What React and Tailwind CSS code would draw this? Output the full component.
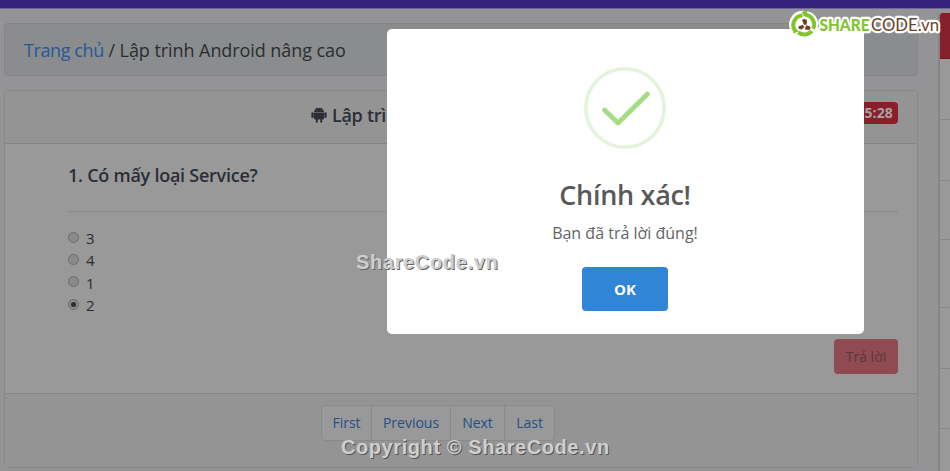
const cells = ['h-[61px]', 'h-[61px]', 'h-[59px]', 'h-[68px]', 'h-[61px]', 'h-[60px]', 'h-[60px]'];

const answers = [
  { label: '3', checked: false },
  { label: '4', checked: false },
  { label: '1', checked: false },
  { label: '2', checked: true },
];

function AndroidIcon() {
  return (
    <svg width="16" height="16" viewBox="0 0 16 16" fill="#2b2e36" className="-mt-px shrink-0">
      <path d="M3 5C3.1 3.2 4.2 1.9 5.7 1.3L5.2.4l.4-.2.6 1a5.6 5.6 0 0 1 3.6 0l.6-1 .4.2-.5.9c1.4.7 2.6 1.9 2.7 3.7z" />
      <path d="M3 5.4h10v5.9c0 .7-.5 1.2-1.2 1.2h-.6v2.2a1 1 0 0 1-2 0v-2.2H6.8v2.2a1 1 0 0 1-2 0v-2.2h-.6c-.7 0-1.2-.5-1.2-1.2z" />
      <rect x=".4" y="5.2" width="2.3" height="5.8" rx="1" />
      <rect x="13.3" y="5.2" width="2.3" height="5.8" rx="1" />
      <circle cx="5.8" cy="3.4" r=".35" fill="#949494" />
      <circle cx="10.2" cy="3.4" r=".35" fill="#949494" />
    </svg>
  );
}

function Radio({ checked }) {
  return (
    <span className="flex size-[11px] items-center justify-center rounded-full border border-[#6c6c6c] bg-[#8a8a8a]">
      {checked && <span className="size-[5px] rounded-full bg-[#2d2d2d]" />}
    </span>
  );
}

function Logo() {
  return (
    <svg width="158" height="34" viewBox="0 0 158 34" className="absolute left-[789px] top-[8px]">
      <g fill="none" stroke="#fff" strokeWidth="7.5" strokeLinejoin="round">
        <path d="M5.9 22.5A10 10 0 0 1 14.5 6.5" />
        <path d="M17 6.6A10.2 10.2 0 0 1 24.3 21.5" />
        <path d="M23 23.2A10.2 10.2 0 0 1 9 24.5" />
      </g>
      <circle cx="15.5" cy="17" r="9" fill="#fff" />
      <g fill="none" stroke="#80c62e" strokeWidth="4">
        <path d="M5.9 22.5A10 10 0 0 1 13.5 7.2" />
        <path d="M16.8 6.8A10 10 0 0 1 24.2 20.8" />
        <path d="M22.8 23.2A10 10 0 0 1 9.2 24.4" />
      </g>
      <path d="M12.5 4l6-1.6-1.5 7z" fill="#80c62e" />
      <path d="M4 25.5l1.3-6 4.7 4z" fill="#80c62e" />
      <g fill="#6b4228">
        <path d="M13 12q3.6-2.2 5.1.8l-.5 3.8-2.6.3z" />
        <path d="M13.8 16.8l1.6 2.4-2.8 2.3q-3.5 0-3.2-3z" />
        <path d="M17 17.3l3.8 1q1.8 2.4-.9 3.8l-4-.6z" />
      </g>
      <g stroke="#fff" strokeWidth="4.5" strokeLinejoin="round" paintOrder="stroke" className="font-['Lato',sans-serif]">
        <text x="30.5" y="23.3" fontSize="17.4" fontWeight="900" fill="#80c62e" textLength="50" lengthAdjust="spacingAndGlyphs">SHARE</text>
        <text x="82" y="23.3" fontSize="17.4" fontWeight="400" fill="#6b4228" textLength="68" lengthAdjust="spacingAndGlyphs">CODE.vn</text>
      </g>
    </svg>
  );
}

export default function App() {
  return (
    <div className="relative h-[471px] w-[950px] overflow-hidden bg-[#949497] font-['Open_Sans','Noto_Sans',sans-serif] text-[#2a2d30]">
      <div className="h-[9px] border-b border-[#6f669a] bg-[#35227f]" />
      <div className="flex">
        <main className="ml-[4px] mt-[14px] w-[914px]">
          <nav className="flex h-[53px] items-center whitespace-pre rounded border border-[#838587] bg-[#8a8c8e] pl-[19px] pt-px text-[18px]">
            <span className="tracking-[-0.4px] text-[#245a99]">Trang chủ</span>
            <span className="tracking-[-0.07px]"> / Lập trình Android nâng cao</span>
          </nav>

          <section className="mt-[14px] h-[378px] rounded border border-[#888889] bg-[#999]">
            <header className="flex h-[53px] items-center border-b border-[#868686] bg-[#949494] pb-[4px] pl-[306px] pr-[19px]">
              <AndroidIcon />
              <h1 className="ml-[5px] flex-1 whitespace-nowrap text-[18px] font-semibold tracking-[-0.3px] text-[#2b2e36]">Lập trình Android nâng cao</h1>
              <span className="-mt-[5px] flex h-[22px] w-[64px] items-center justify-end rounded bg-[#892029] pr-[5px] text-[14px] font-bold tracking-[0.15px] text-[#a9a3a4]">
                05:28
              </span>
            </header>

            <div className="h-[249px] pl-[63px] pr-[19px]">
              <h2 className="flex h-[68px] items-center border-b border-[#8a8a8a] pb-[4px] text-[18px] font-semibold tracking-[-0.25px] text-[#2b2e36]">
                1. Có mấy loại Service?
              </h2>
              <div className="mt-[14px]">
                {answers.map((a) => (
                  <label key={a.label} className="flex h-[22.4px] items-center gap-[7px] text-[15px]">
                    <Radio checked={a.checked} />
                    <span className="pt-[2px]">{a.label}</span>
                  </label>
                ))}
              </div>
              <div className="mt-[23px] flex justify-end">
                <button className="h-[35px] w-[64px] rounded bg-[#8f4b51] text-[14px] text-[#5e373d]">Trả lời</button>
              </div>
            </div>

            <footer className="h-[74px] border-t border-[#868686] bg-[#949494] pl-[316px] pt-[11px]">
              <div className="flex h-[36px] w-[234px] divide-x divide-[#888a8c] rounded border border-[#888a8c] bg-[#999] text-[14px] text-[#234f87]">
                <span className="flex w-[50px] items-center justify-center pb-px">First</span>
                <span className="flex w-[79px] items-center justify-center pb-px">Previous</span>
                <span className="flex w-[54px] items-center justify-center pb-px">Next</span>
                <span className="flex w-[49px] items-center justify-center pb-px">Last</span>
              </div>
            </footer>
          </section>
        </main>

        <aside className="ml-[20px] mt-[4px] w-[12px] shrink-0 overflow-hidden rounded-tl border-l-2 border-[#858586] bg-[#999]">
          <div className="-ml-[2px] h-[46px] border-b border-[#701c24] bg-[#861f2a]" />
          {cells.map((height, i) => (
            <div key={i} className={`${height} border-b border-[#868686]`} />
          ))}
        </aside>
      </div>

      <div role="dialog" className="absolute left-[387px] top-[29px] flex h-[305px] w-[477px] flex-col items-center rounded-[5px] bg-white pr-px pt-[38px]">
        <svg width="82" height="82" viewBox="0 0 82 82" fill="none" className="shrink-0">
          <circle cx="41" cy="41" r="39.2" stroke="#e4f4db" strokeWidth="3.6" />
          <path d="M20.5 43L34 56L63.5 27" stroke="#a5dc86" strokeWidth="4.8" strokeLinecap="round" strokeLinejoin="round" />
        </svg>
        <h2 className="mt-[25px] text-[27px] font-semibold leading-[42px] tracking-[-0.3px] text-[#595959]">Chính xác!</h2>
        <p className="mt-[4px] text-[16px] leading-[26px] text-[#646464]">Bạn đã trả lời đúng!</p>
        <button className="mt-[21px] h-[44px] w-[86px] rounded bg-[#3085d6] text-[15px] font-bold text-white">OK</button>
      </div>

      <div className="absolute left-[356px] top-[250px] whitespace-nowrap font-['Liberation_Sans',sans-serif] text-[20px] font-bold leading-[24px] tracking-[0.65px] text-[#cfcfcf] [text-shadow:1px_1px_0_#666]">
        ShareCode.vn
      </div>
      <div className="absolute left-[341px] top-[435px] whitespace-nowrap font-['Liberation_Sans',sans-serif] text-[20px] font-bold leading-[24px] tracking-[0.58px] text-[#cfcfcf] [text-shadow:1px_1px_0_#555]">
        Copyright © ShareCode.vn
      </div>
      <Logo />
    </div>
  );
}
